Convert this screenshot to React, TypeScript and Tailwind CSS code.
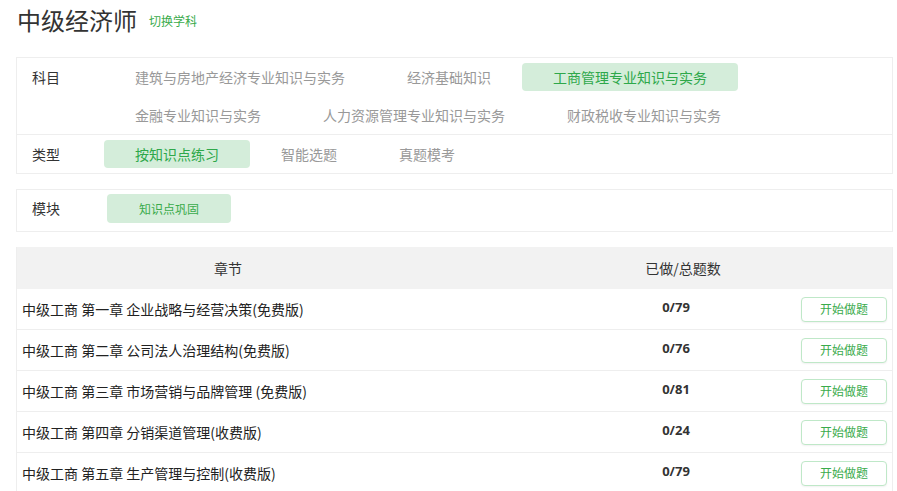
import React, { useState } from "react";

const subjects = [
  "建筑与房地产经济专业知识与实务",
  "经济基础知识",
  "工商管理专业知识与实务",
  "金融专业知识与实务",
  "人力资源管理专业知识与实务",
  "财政税收专业知识与实务",
];

const types = ["按知识点练习", "智能选题", "真题模考"];

const chapters = [
  { name: "中级工商 第一章 企业战略与经营决策(免费版)", done: 0, total: 79 },
  { name: "中级工商 第二章 公司法人治理结构(免费版)", done: 0, total: 76 },
  { name: "中级工商 第三章 市场营销与品牌管理 (免费版)", done: 0, total: 81 },
  { name: "中级工商 第四章 分销渠道管理(收费版)", done: 0, total: 24 },
  { name: "中级工商 第五章 生产管理与控制(收费版)", done: 0, total: 79 },
];

const Option = ({
  label,
  active,
  onClick,
}: {
  label: string;
  active: boolean;
  onClick: () => void;
}) => (
  <div
    onClick={onClick}
    className={`my-[5px] h-[28px] px-[31px] flex items-center rounded-[4px] text-[14px] cursor-pointer whitespace-nowrap ${
      active ? "bg-[#d4edda] text-[#2ea84a]" : "text-[#999]"
    }`}
  >
    {label}
  </div>
);

const App = () => {
  const [subject, setSubject] = useState(subjects[2]);
  const [type, setType] = useState(types[0]);

  return (
    <div className="w-[897px] min-h-[491px] bg-white text-[#333] font-['Noto_Sans_CJK_SC',sans-serif]">
      <div className="pl-[17px] pt-[6px] mb-[23px] flex items-center gap-[12px]">
        <span className="text-[24px] leading-[28px]">中级经济师</span>
        <span className="text-[12px] leading-[16px] text-[#3aab4c] mt-[2px] cursor-pointer">
          切换学科
        </span>
      </div>

      <div className="ml-[16px] w-[877px] border border-[#eee]">
        <div className="flex pl-[15px] border-b border-[#eee]">
          <div className="w-[72px] shrink-0 h-[38px] flex items-center text-[14px]">
            科目
          </div>
          <div className="flex flex-wrap flex-1">
            {subjects.map((s, i) => (
              <Option
                key={i}
                label={s}
                active={s === subject}
                onClick={() => setSubject(s)}
              />
            ))}
          </div>
        </div>
        <div className="flex pl-[15px]">
          <div className="w-[72px] shrink-0 h-[38px] flex items-center text-[14px]">
            类型
          </div>
          <div className="flex flex-wrap flex-1">
            {types.map((t, i) => (
              <Option
                key={i}
                label={t}
                active={t === type}
                onClick={() => setType(t)}
              />
            ))}
          </div>
        </div>
      </div>

      <div className="ml-[16px] mt-[15px] w-[877px] border border-[#eee] flex items-center pl-[15px] pt-[4px] pb-[8px]">
        <div className="w-[75px] text-[14px]">模块</div>
        <div className="h-[29px] px-[32px] flex items-center rounded-[4px] bg-[#d4edda] text-[#3aab4c] text-[12px]">
          知识点巩固
        </div>
      </div>

      <div className="ml-[16px] mt-[15px] w-[877px] border-x border-[#eee]">
        <div className="flex h-[42px] items-center bg-[#f2f2f2] text-[14px]">
          <div className="w-[422px] text-center">章节</div>
          <div className="w-[122px]" />
          <div className="w-[244px] text-center">已做/总题数</div>
        </div>
        {chapters.map((c, i) => (
          <div
            key={i}
            className="flex h-[41px] items-center border-b border-[#eee] text-[14px]"
          >
            <div className="w-[544px] pl-[5px] text-[#222]">{c.name}</div>
            <div className="w-[230px] text-center font-['Open_Sans',sans-serif] font-bold text-[13px] -mt-[2px]">
              {c.done}/{c.total}
            </div>
            <button className="ml-[10px] w-[86px] h-[25px] border border-[#bfe8c8] rounded-[4px] bg-white text-[#3aab4c] text-[12px] shadow-[0_1px_2px_rgba(0,0,0,0.06)]">
              开始做题
            </button>
          </div>
        ))}
      </div>
    </div>
  );
};

export default App;
